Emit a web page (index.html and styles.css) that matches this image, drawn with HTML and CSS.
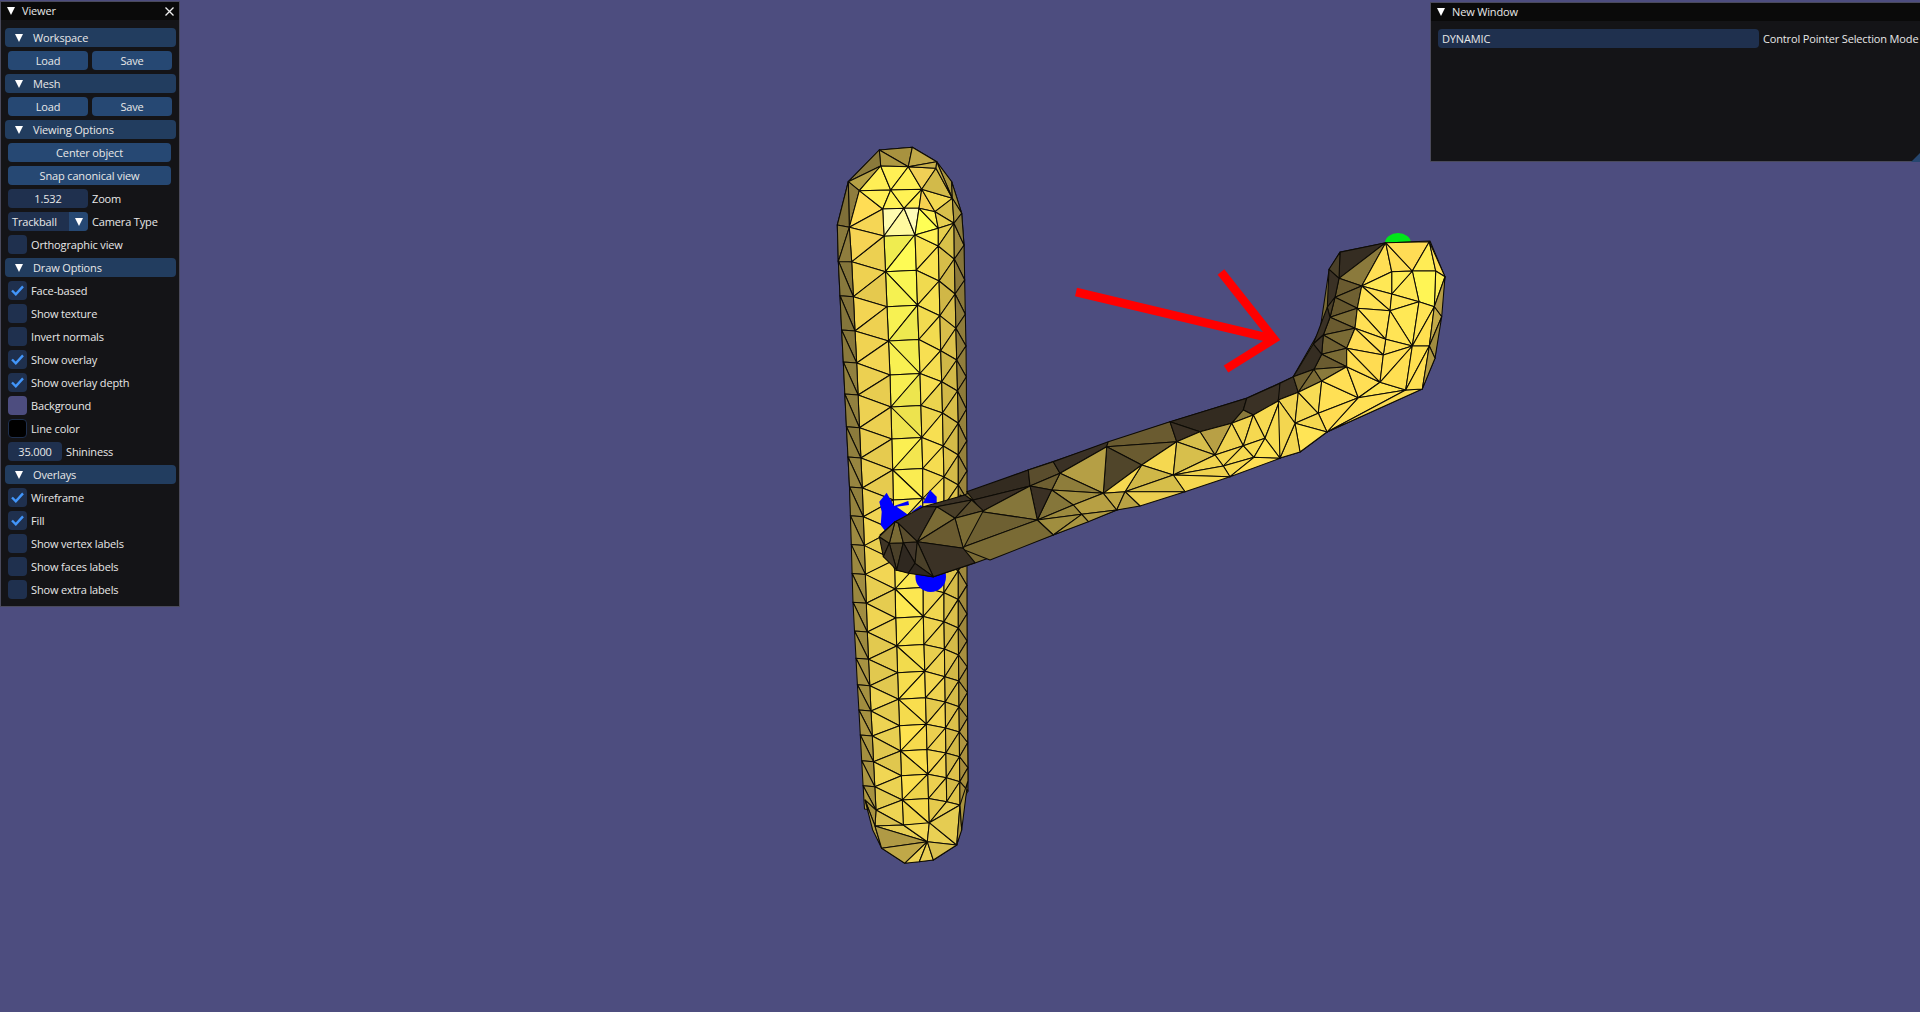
FILE: index.html
```html
<!DOCTYPE html>
<html lang="en">
<head>
<meta charset="utf-8">
<title>Viewer</title>
<link rel="stylesheet" href="styles.css">
</head>
<body>
<svg class="scene" viewBox="0 0 1920 1012" width="1920" height="1012">
  <g id="tube" class="mesh"></g>
  <g class="blue">
    <path d="M886.7 492.7 L894 506 L908.3 501 L909 505 L896.7 506.7 L908.3 515 L895 521.7 L887.3 534 L880.7 525 L881.7 511.7 L879.3 501.7 Z"/>
    <path d="M922.7 503.3 L930 490 L936.7 496.7 L936.7 503.3 Z"/>
    <path d="M911 512 L921 505 L925 510 Z"/>
    <circle cx="930.7" cy="576.7" r="15.3"/>
  </g>
  <path class="green" d="M1385 243 A13 10 0 0 1 1411 243 Z"/>
  <g id="arm" class="mesh"></g>
  <path class="arrow" d="M1076 292 L1274 339 M1221 272 L1274 339 L1226 369"/>
</svg>

<section class="window viewer">
  <header class="title"><i class="tri"></i><span class="title-text">Viewer</span>
    <svg class="close" viewBox="0 0 9 9" width="9" height="9"><path d="M.5.5 8.5 8.5M8.5.5.5 8.5"/></svg>
  </header>
  <div class="body">
    <div class="head"><i class="tri"></i>Workspace</div>
    <div class="row"><button class="btn half">Load</button><button class="btn half">Save</button></div>
    <div class="head"><i class="tri"></i>Mesh</div>
    <div class="row"><button class="btn half">Load</button><button class="btn half">Save</button></div>
    <div class="head"><i class="tri"></i>Viewing Options</div>
    <div class="row"><button class="btn wide">Center object</button></div>
    <div class="row"><button class="btn wide">Snap canonical view</button></div>
    <div class="row"><span class="field w80">1.532</span><span>Zoom</span></div>
    <div class="row"><span class="combo"><span class="combo-text">Trackball</span><span class="combo-arrow"><i class="tri"></i></span></span><span>Camera Type</span></div>
    <div class="row check"><i class="box"></i><span>Orthographic view</span></div>
    <div class="head"><i class="tri"></i>Draw Options</div>
    <div class="row check"><i class="box on"><svg viewBox="0 0 13 11" width="13" height="11"><path d="M1 5.5 4.8 9.3 12 1.4"/></svg></i><span>Face-based</span></div>
    <div class="row check"><i class="box"></i><span>Show texture</span></div>
    <div class="row check"><i class="box"></i><span>Invert normals</span></div>
    <div class="row check"><i class="box on"><svg viewBox="0 0 13 11" width="13" height="11"><path d="M1 5.5 4.8 9.3 12 1.4"/></svg></i><span>Show overlay</span></div>
    <div class="row check"><i class="box on"><svg viewBox="0 0 13 11" width="13" height="11"><path d="M1 5.5 4.8 9.3 12 1.4"/></svg></i><span>Show overlay depth</span></div>
    <div class="row check"><i class="swatch bg"></i><span>Background</span></div>
    <div class="row check"><i class="swatch line"></i><span>Line color</span></div>
    <div class="row"><span class="field w54">35.000</span><span>Shininess</span></div>
    <div class="head"><i class="tri"></i>Overlays</div>
    <div class="row check"><i class="box on"><svg viewBox="0 0 13 11" width="13" height="11"><path d="M1 5.5 4.8 9.3 12 1.4"/></svg></i><span>Wireframe</span></div>
    <div class="row check"><i class="box on"><svg viewBox="0 0 13 11" width="13" height="11"><path d="M1 5.5 4.8 9.3 12 1.4"/></svg></i><span>Fill</span></div>
    <div class="row check"><i class="box"></i><span>Show vertex labels</span></div>
    <div class="row check"><i class="box"></i><span>Show faces labels</span></div>
    <div class="row check"><i class="box"></i><span>Show extra labels</span></div>
  </div>
</section>

<section class="window newwin">
  <header class="title"><i class="tri"></i><span class="title-text">New Window</span></header>
  <div class="body">
    <div class="row"><span class="field-left">DYNAMIC</span><span>Control Pointer Selection Mode</span></div>
  </div>
  <i class="grip"></i>
</section>
<script src="scene.js"></script>
</body>
</html>
```
FILE: styles.css
```css
* { box-sizing: border-box; }
html, body { margin: 0; height: 1012px; overflow: hidden; }
body {
  background: #4d4d7f;
  color: #e8e8e8;
  font-family: "Open Sans", "Noto Sans", sans-serif;
  font-size: 11px;
  letter-spacing: -0.15px;
  line-height: 19px;
}
.scene { position: absolute; left: 0; top: 0; display: block; }
.mesh polygon { stroke: #0d0b06; stroke-width: 1.05; stroke-linejoin: round; }
.blue { fill: #0000ff; }
.green { fill: #00e61a; }
.arrow { fill: none; stroke: #ff0000; stroke-width: 8.5; stroke-linejoin: miter; stroke-miterlimit: 6; }

.window {
  position: absolute;
  background: #141417;
  border: 1px solid #4a4a5c;
}
.viewer { left: 0; top: 1px; width: 180px; height: 606px; }
.newwin { left: 1430px; top: 2px; width: 500px; height: 160px; }

.title {
  display: flex;
  align-items: center;
  height: 18px;
  background: #0a0a0a;
  padding-left: 6px;
  position: relative;
}
.title-text { margin: -1px 0 0 7px; }
.close { position: absolute; left: 164px; top: 5px; }
.close path { stroke: #f0f0f0; stroke-width: 1.3; fill: none; }

.tri {
  display: block;
  flex: none;
  width: 0;
  height: 0;
  border-left: 4.5px solid transparent;
  border-right: 4.5px solid transparent;
  border-top: 8px solid #fff;
}

.body { display: flex; flex-direction: column; gap: 4px; padding: 8px 4px 0; }
.newwin .body { padding: 8px 7px 0; }

.head {
  display: flex;
  align-items: center;
  height: 19px;
  width: 171px;
  background: #223d5f;
  border-radius: 4px;
  padding-left: 10px;
}
.head .tri { margin-right: 10px; }

.row { display: flex; align-items: center; gap: 4px; height: 19px; padding-left: 3px; white-space: nowrap; }
.newwin .row { padding-left: 0; }
.btn {
  height: 19px;
  padding: 0;
  border: 0;
  border-radius: 4px;
  background: #264873;
  color: inherit;
  font: inherit;
  letter-spacing: inherit;
  flex: none;
}
.half { width: 80px; }
.wide { width: 163px; }

.field, .field-left, .combo, .box, .swatch { background: #1f304e; border-radius: 4px; height: 19px; flex: none; }
.field { text-align: center; }
.w80 { width: 80px; }
.w54 { width: 54px; }
.field-left { width: 321px; padding-left: 4px; }

.combo { display: flex; width: 80px; overflow: hidden; }
.combo-text { flex: 1; padding-left: 4px; }
.combo-arrow { display: flex; align-items: center; justify-content: center; width: 19px; background: #264873; }

.check { gap: 4px; }
.box { display: flex; align-items: center; justify-content: center; width: 19px; }
.box path { fill: none; stroke: #4296fa; stroke-width: 2.4; }
.swatch { display: block; width: 19px; }
.swatch.bg { background: #4d4d7f; }
.swatch.line { background: #000; border: 1px solid #1f304e; }

.grip {
  position: absolute;
  left: 480px;
  top: 149px;
  width: 0;
  height: 0;
  border-left: 10px solid transparent;
  border-bottom: 10px solid #26466f;
}
```
FILE: scene.js
```js
(function () {
  var NS = "http://www.w3.org/2000/svg";
  var tube = document.getElementById("tube");
  var arm = document.getElementById("arm");

  function add(g, pts, fill) {
    var p = document.createElementNS(NS, "polygon");
    p.setAttribute("points", pts.map(function (v) { return v[0].toFixed(1) + "," + v[1].toFixed(1); }).join(" "));
    p.setAttribute("fill", fill);
    g.appendChild(p);
  }
  function zoomed(g, ox, oy, list) {
    list.forEach(function (t) {
      var pts = [];
      for (var i = 1; i < t.length; i += 2) pts.push([ox + t[i] / 3, oy + t[i + 1] / 3]);
      add(g, pts, t[0]);
    });
  }
  function lerp(table, i) {
    for (var k = 0; k < table.length - 1; k++) {
      var a = table[k], b = table[k + 1];
      if (i <= b[0]) return a[1] + (b[1] - a[1]) * (i - a[0]) / (b[0] - a[0]);
    }
    return table[table.length - 1][1];
  }
  function mix(c1, c2, f) {
    return "rgb(" + [0, 1, 2].map(function (n) { return Math.round(c1[n] + (c2[n] - c1[n]) * f); }).join(",") + ")";
  }
  function noise(n) { var s = Math.sin(n * 12.9898) * 43758.5453; return s - Math.floor(s); }

  /* ---------- vertical tube: measured vertex columns ---------- */
  var rows = [236, 271.7, 306.7, 341, 375, 407, 439, 470, 500, 530, 560, 589, 618, 646, 672.7, 699.3, 725.7, 751, 775.7, 800, 825];
  var yL = [[0, 261.7], [1, 296.7], [2, 331], [3, 363], [4, 395], [5, 427.7], [6, 458], [7, 488], [12, 632], [13, 659.3], [14, 685.7], [15, 711], [16, 736], [17, 761.7], [18, 786.7], [19, 810]];
  var yR = [[0, 246], [1, 281], [2, 315.7], [3, 350.7], [4, 381.7], [5, 413], [6, 446], [7, 477], [12, 621.7], [13, 649], [14, 676.7], [15, 702], [16, 728], [17, 753], [18, 777.7], [19, 801.7]];
  var yRR = [[0, 259], [1, 294], [2, 328.3], [3, 360], [4, 391], [5, 423.3], [6, 455], [7, 485], [12, 628], [13, 655], [14, 681], [15, 706.7], [16, 732], [17, 756.7], [18, 781.7], [19, 805]];
  var x1 = [[0, 884], [4, 890], [7, 892.7], [12, 895.7], [20, 903.3]];
  var x2 = [[0, 915], [4, 920], [7, 922.7], [12, 923.3], [20, 929.3]];
  var xL = [[0, 851.7], [3, 856.7], [7, 862.3], [12, 867.3], [19, 876]];
  var xS = [[0, 838.3], [3, 843.3], [7, 849.5], [11, 853], [13, 856], [17, 861.7], [19, 864.5]];
  var xR = [[0, 938.3], [3, 940.7], [4, 941.7], [7, 944], [12, 944], [19, 946.7]];
  var xRR = [[0, 954.3], [3, 956.7], [5, 958.3], [12, 958.3], [19, 960]];
  var xE = [[0, 964], [3, 966], [7, 967], [12, 967], [19, 968]];

  function c1(i) { return [lerp(x1, i), rows[i]]; }
  function c2(i) { return [lerp(x2, i), rows[i] - 1.5]; }
  function cL(j) { return [lerp(xL, j), lerp(yL, j)]; }
  function cS(j) { return [lerp(xS, j), lerp(yL, j) - 1]; }
  function cR(j) { return [lerp(xR, j), lerp(yR, j)]; }
  function cRR(j) { return [lerp(xRR, j), lerp(yRR, j)]; }
  function cE(j) { return [lerp(xE, j), lerp(yRR, j) - 14]; }

  var TOP = { c: [255, 252, 85], l: [246, 216, 84], s: [138, 122, 62], r: [255, 232, 84], rr: [222, 196, 76], e: [142, 124, 60] };
  var BOT = { c: [255, 226, 80], l: [240, 214, 84], s: [176, 154, 68], r: [243, 214, 82], rr: [226, 198, 76], e: [176, 150, 64] };
  function shade(key, i, n) {
    var f = Math.min(1, i / 16);
    var a = TOP[key], b = BOT[key];
    var base = [a[0] + (b[0] - a[0]) * f, a[1] + (b[1] - a[1]) * f, a[2] + (b[2] - a[2]) * f];
    var dark = [base[0] * 0.93, base[1] * 0.93, base[2] * 0.93];
    return mix(base, dark, noise(n + i * 7));
  }

  add(tube, [[879.3, 150], [912.3, 147.3], [936.7, 161.7], [951.7, 181.7], [961.7, 213.3], [964, 245], [968, 780], [960, 833], [956.7, 845], [933.3, 860], [904.7, 863], [881.7, 848], [875, 833], [865, 800], [838.3, 261], [837.3, 225], [848.3, 181.7]], "#e0c850");

  for (var i = 0; i < 20; i++) {
    if (i % 2 === 0) {
      add(tube, [c1(i), c2(i), c1(i + 1)], shade("c", i, 1));
      add(tube, [c2(i), c2(i + 1), c1(i + 1)], shade("c", i, 2));
    } else {
      add(tube, [c1(i), c2(i), c2(i + 1)], shade("c", i, 1));
      add(tube, [c1(i), c1(i + 1), c2(i + 1)], shade("c", i, 2));
    }
    add(tube, [c1(i), c1(i + 1), cL(i)], shade("l", i, 3));
    add(tube, [c2(i), c2(i + 1), cR(i)], shade("r", i, 4));
    if (i < 19) {
      add(tube, [cL(i), cL(i + 1), c1(i + 1)], shade("l", i, 5));
      add(tube, [cS(i), cL(i), cL(i + 1)], shade("s", i, 6));
      add(tube, [cS(i), cS(i + 1), cL(i + 1)], shade("s", i, 7));
      add(tube, [cR(i), cR(i + 1), c2(i + 1)], shade("r", i, 8));
      add(tube, [cR(i), cRR(i), cR(i + 1)], shade("rr", i, 9));
      add(tube, [cRR(i), cRR(i + 1), cR(i + 1)], shade("rr", i, 10));
      add(tube, [cRR(i), cE(i), cE(i + 1)], shade("e", i, 11));
      add(tube, [cRR(i), cE(i + 1), cRR(i + 1)], shade("e", i, 12));
    }
  }

  /* top cap */
  var a = [178, 30], b = [277, 22], c = [350, 65], d = [395, 125], e = [425, 220], f = [432, 315], g = [85, 125], h = [52, 255],
      ii = [182, 78], j = [265, 80], k = [118, 152], l = [212, 150], m = [305, 148], o = [88, 262], p = [188, 207], q = [252, 205],
      r = [297, 205], s = [345, 215], t = [402, 250], u = [397, 175], v = [192, 288], w = [285, 285], x = [355, 265], y = [355, 318], z = [403, 357],
      n = [348, 85], lo = [95, 365], so = [55, 365];
  function T(col) { var out = [col]; for (var q2 = 1; q2 < arguments.length; q2++) out.push(arguments[q2][0], arguments[q2][1]); return out; }
  zoomed(tube, 820, 140, [
    T("#a8923f", a, b, j), T("#ad9842", a, j, ii), T("#c0a848", b, c, j), T("#8a7a3c", a, ii, g), T("#b5a045", g, ii, k),
    T("#ffee55", ii, l, k), T("#fff055", ii, j, l), T("#fff055", j, m, l), T("#f0cf55", j, n, m), T("#c7af48", c, n, j),
    T("#8f7d3e", g, k, o), T("#7f6f38", g, o, h), T("#ffdd55", k, p, o), T("#ffef55", k, l, p), T("#fff255", l, q, p), T("#fff255", l, m, q),
    T("#ffee55", m, r, q), T("#f7d050", m, s, r), T("#f2d850", m, u, s), T("#d2ba4a", n, u, m), T("#a89540", c, d, u), T("#c7b048", n, c, u),
    T("#9c8a3e", d, e, u), T("#d8c04c", u, t, s), T("#a89540", u, e, t),
    T("#fffcb0", p, q, v), T("#fffaa0", q, w, v), T("#fffdb8", q, r, w), T("#ffff55", r, x, w), T("#fff255", r, s, x), T("#e8d050", s, t, x),
    T("#f5d655", o, p, v), T("#f6d454", o, v, lo), T("#8a7a3c", h, o, so), T("#8f7d3e", o, lo, so),
    T("#fff255", w, x, y), T("#e7cf4e", x, t, y), T("#d8c24a", t, z, y), T("#a08c40", t, f, z), T("#8a7a3a", e, f, t)
  ]);

  /* bottom cap */
  var L19 = [108, 630], b1 = [105, 678], b2 = [190, 675], b3 = [268, 668], b4 = [262, 725], b5 = [194, 790], b6 = [238, 785], b7 = [280, 780],
      b8 = [350, 735], b9 = [365, 690], b10 = [320, 605], b11 = [125, 745], rr = [360, 615], e19 = [383, 545], s19 = [75, 600], s20 = [98, 690];
  zoomed(tube, 840, 600, [
    T("#d9c050", L19, b1, b2), T("#a8933f", s19, b1, L19), T("#e8cf55", b1, b2, b4), T("#f4da58", b2, b3, b4), T("#e9d054", b3, b8, b4),
    T("#e8cf53", b3, b10, rr), T("#e5cc52", b3, rr, b8), T("#a8933f", rr, b9, b8), T("#a8933f", rr, e19, b9), T("#b09b45", s19, s20, b11, b1),
    T("#b09a45", b1, b4, b11), T("#c0a848", b11, b4, b5), T("#ecd256", b5, b4, b6), T("#e9cf54", b6, b4, b7), T("#d8bf4e", b4, b8, b7)
  ]);

  /* ---------- bent arm ---------- */
  add(arm, [[895, 522], [1028, 470], [1170, 422], [1247, 398], [1293, 377], [1320, 330], [1329, 270], [1340, 252], [1385, 243], [1430, 241], [1445, 277], [1435, 358], [1422, 389], [1327, 432], [1300, 452], [1280, 458], [1183, 492], [1117, 510], [1053, 535], [975, 563], [933, 577], [895, 570], [880, 535]], "#7a6b35");

  /* middle section */
  var T1 = [0, 345], T2 = [20, 335], T3 = [205, 270], T4 = [280, 245], T5 = [445, 185], T6 = [630, 125], T7 = [860, 55], T8 = [960, 10],
      A1 = [40, 360], B1 = [210, 318], C1 = [232, 420], D1 = [300, 280], E1 = [430, 340], F1 = [440, 200], G1 = [545, 255], H1 = [650, 185], I1 = [720, 155],
      J1 = [640, 285], K1 = [765, 225], L1 = [815, 130], M1 = [850, 90], N1 = [850, 197], O1 = [915, 175], P1 = [882, 232], Q1 = [790, 258], R1 = [880, 105], S1 = [960, 60],
      V1 = [0, 505], V2 = [65, 395], V3 = [280, 465], V4 = [385, 425], V5 = [365, 403], V6 = [340, 375], V7 = [275, 330], V8 = [470, 390], V9 = [495, 335], V10 = [540, 378], V11 = [675, 335], V12 = [810, 290], V13 = [960, 235], V0 = [90, 540], L0 = [0, 410];
  zoomed(arm, 960, 380, [
    T("#3c3226", T1, A1, V2, L0), T("#4e432b", L0, V2, V1), T("#332b20", T2, T3, B1, A1), T("#5a4d2d", T3, T4, D1, B1), T("#3a3125", T4, T5, F1, D1),
    T("#6a5b30", T5, T6, H1, F1), T("#6a5b30", F1, H1, G1), T("#50452a", F1, G1, E1), T("#b59f45", D1, F1, E1),
    T("#332b20", T6, T7, M1, L1, I1), T("#3a3024", T6, I1, H1), T("#3a3125", T7, T8, S1, R1, M1), T("#8a7a3c", L1, M1, R1),
    T("#f7da52", R1, S1, O1), T("#f3d650", L1, R1, N1), T("#f5d850", R1, O1, N1), T("#b8a045", I1, L1, K1), T("#f0d350", L1, N1, K1), T("#d7bf4c", H1, I1, K1),
    T("#f5d850", G1, H1, J1), T("#d7bf4c", H1, K1, J1), T("#f5d850", K1, N1, Q1), T("#f6da52", N1, P1, Q1), T("#f8dc52", N1, O1, P1),
    T("#f8dc52", O1, S1, V13), T("#ffe455", O1, P1, V13), T("#f6d850", P1, Q1, V12), T("#ffe055", P1, V12, V13),
    T("#f2d550", J1, K1, Q1), T("#efd24f", J1, Q1, V12), T("#f5d850", J1, V12, V11),
    T("#cfb748", G1, J1, V9), T("#d6be4a", V9, J1, V11), T("#eccf50", V9, V11, V10), T("#f6d851", E1, G1, V9), T("#c0a845", E1, V9, V8), T("#b9a244", V9, V10, V8),
    T("#8e7d3b", D1, E1, V7), T("#a18e3f", V7, E1, V6), T("#b7a044", V6, E1, V8, V5), T("#b09a42", V5, V8, V4),
    T("#85763a", C1, V7, V6), T("#9c8a3e", C1, V6, V5), T("#a08e3f", C1, V5, V3), T("#a99540", V5, V4, V3),
    T("#6e5f31", B1, D1, V7), T("#3a3024", B1, V7, C1), T("#3a3024", A1, B1, V2), T("#85763a", V2, B1, C1), T("#6e6032", V2, C1, V1), T("#7a6b35", V1, C1, V3, V0)
  ]);

  /* near end over the vertical tube */
  var Pa = [165, 485], Pb = [250, 440], Pc = [375, 405], Qa = [290, 440], Qb = [395, 420], Qc = [430, 452], Qd = [345, 475], Qe = [370, 565], Qf = [405, 608], Qg = [280, 650],
      Qh = [232, 545], Qi = [190, 548], Qj = [148, 550], Qk = [175, 490], Ql = [225, 610], Qm = [130, 590], Qn = [118, 530], Qo = [170, 630], Qp = [205, 640];
  zoomed(arm, 840, 360, [
    T("#3a3125", Pb, Pc, Qb, Qa), T("#4a3f29", Qa, Qb, Qd), T("#5a4d2d", Qb, Qc, Qd), T("#7a6b35", Qd, Qc, Qe),
    T("#3a3125", Pa, Pb, Qa, Qh, Qk), T("#7a6b35", Qa, Qd, Qh), T("#6a5b30", Qd, Qe, Qh), T("#3a3125", Qh, Qe, Qf, Qg),
    T("#40362a", Qi, Qh, Ql), T("#4a4029", Qj, Qi, Qo), T("#7a6b35", Pa, Qj, Qi, Qk), T("#5a4d2d", Qk, Qi, Qh),
    T("#3f3526", Qn, Qj, Qm), T("#3f3526", Qm, Qj, Qo), T("#2f2820", Qo, Qi, Ql, Qp), T("#4a4029", Ql, Qh, Qg), T("#2f2820", Qp, Ql, Qg), T("#6a5b30", Qn, Pa, Qj)
  ]);

  /* bright head */
  var A = [437, 68], B = [568, 65], C = [615, 170], D = [605, 290], E = [585, 415], F = [547, 507], G = [497, 510], H = [455, 155], I = [517, 153], J = [587, 153],
      K = [365, 198], Lh = [455, 222], M = [537, 245], N = [352, 265], O = [450, 272], Ph = [583, 260], Q = [345, 325], R = [437, 358], S = [517, 378], Th = [568, 378],
      U = [320, 385], Vh = [430, 405], W = [420, 487], X = [320, 440], Y = [355, 533], Z = [245, 483],
      a1 = [300, 97], a2 = [267, 148], a3 = [297, 175], a4 = [285, 232], a5 = [262, 262], a6 = [270, 292], a7 = [250, 345], a8 = [220, 372], a9 = [245, 403], a10 = [160, 470], a11 = [222, 448],
      z2 = [175, 517], z3 = [115, 540], z4 = [165, 610], z5 = [235, 580], z6 = [261, 636], z7 = [120, 714], z8 = [120, 490], z9 = [180, 696];
  zoomed(arm, 1240, 220, [
    T("#352d22", a1, A, a3), T("#4a4029", a1, a2, a3), T("#8b7a3c", A, K, a3), T("#6a5b30", a3, K, a4), T("#6f6032", K, N, a4), T("#65572e", a4, N, a6),
    T("#7a6b35", N, Q, a6), T("#6a5b30", a6, Q, a7), T("#7a6b35", Q, U, a7), T("#6f6032", a7, U, a9), T("#7a6b35", U, X, a9), T("#6a5b30", a9, X, a11),
    T("#3a3125", a2, a3, a4, a5), T("#4a3f29", a5, a4, a6), T("#3a3125", a5, a6, a7, a8), T("#40362a", a8, a7, a9), T("#352d22", a8, a9, a11, a10),
    T("#3a3125", z8, a10, z2, z3), T("#6e5f31", a10, a11, z2), T("#7a6a35", a11, Z, z2), T("#8a7a3c", a11, X, Z),
    T("#f0d350", z3, z2, z4), T("#f4d852", z2, z5, z4), T("#f7dc55", z2, Z, z5), T("#ffe055", Z, Y, z5), T("#ffdf55", Z, X, Y), T("#ffdf55", X, W, Y),
    T("#ffe555", Y, W, G), T("#ffe055", Y, G, z6), T("#f9da52", G, F, z6), T("#ffdc52", z5, Y, z6), T("#f6d850", z4, z5, z6), T("#ffe455", z4, z6, z9), T("#f3d650", z4, z9, z7), T("#f3d650", z3, z4, z7),
    T("#ffdf55", A, H, K), T("#ffdd55", A, I, H), T("#ffdc55", A, B, I), T("#ffec55", B, J, I), T("#ffdf55", B, C, J), T("#fff055", J, C, Ph),
    T("#fff555", I, J, Ph, M), T("#ffe855", I, M, Lh), T("#ffec55", H, I, Lh), T("#ffe855", H, Lh, K), T("#ffe055", K, Lh, O), T("#ffe255", K, O, N), T("#ffe455", Lh, M, O),
    T("#ffe855", M, S, O), T("#ffe455", M, Ph, S), T("#ffe050", Ph, Th, S), T("#ffe255", N, O, R), T("#ffe055", N, R, Q), T("#ffe455", O, S, R), T("#ffe055", R, S, Vh),
    T("#ffdf55", Q, R, Vh), T("#ffdd55", Q, Vh, U), T("#ffdc52", U, Vh, W), T("#ffe055", Vh, S, W), T("#ffdf52", S, G, W), T("#ffdd52", U, W, X),
    T("#ffe050", S, Th, G), T("#ffdf52", Th, F, G), T("#b59c46", C, D, Ph), T("#c2a948", Ph, D, Th), T("#a08c3f", D, E, Th), T("#b29b44", Th, E, F)
  ]);
})();
```
